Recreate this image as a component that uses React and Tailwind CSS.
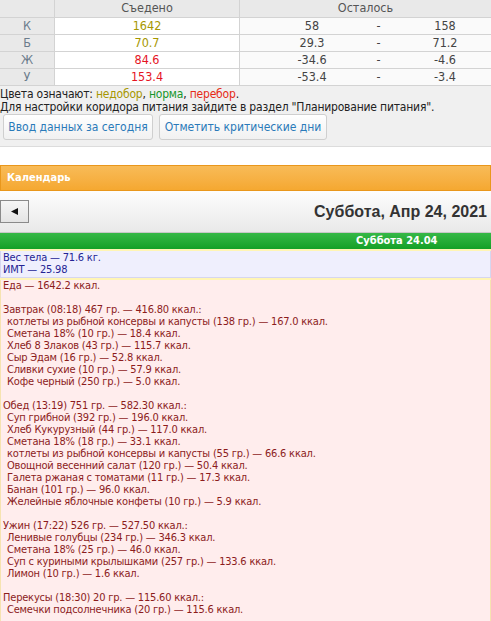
import React from "react";

const nutrients = [
    { label: "К", eaten: "1642", color: "text-[#a69700]", left: "58", right: "158" },
    { label: "Б", eaten: "70.7", color: "text-[#a69700]", left: "29.3", right: "71.2" },
    { label: "Ж", eaten: "84.6", color: "text-[#e5141f]", left: "-34.6", right: "-4.6" },
    { label: "У", eaten: "153.4", color: "text-[#e5141f]", left: "-53.4", right: "-3.4" },
];

const meals = [
    {
        title: "Завтрак (08:18) 467 гр. — 416.80 ккал.:",
        items: [
            "котлеты из рыбной консервы и капусты (138 гр.) — 167.0 ккал.",
            "Сметана 18% (10 гр.) — 18.4 ккал.",
            "Хлеб 8 Злаков (43 гр.) — 115.7 ккал.",
            "Сыр Эдам (16 гр.) — 52.8 ккал.",
            "Сливки сухие (10 гр.) — 57.9 ккал.",
            "Кофе черный (250 гр.) — 5.0 ккал.",
        ],
    },
    {
        title: "Обед (13:19) 751 гр. — 582.30 ккал.:",
        items: [
            "Суп грибной (392 гр.) — 196.0 ккал.",
            "Хлеб Кукурузный (44 гр.) — 117.0 ккал.",
            "Сметана 18% (18 гр.) — 33.1 ккал.",
            "котлеты из рыбной консервы и капусты (55 гр.) — 66.6 ккал.",
            "Овощной весенний салат (120 гр.) — 50.4 ккал.",
            "Галета ржаная с томатами (11 гр.) — 17.3 ккал.",
            "Банан (101 гр.) — 96.0 ккал.",
            "Желейные яблочные конфеты (10 гр.) — 5.9 ккал.",
        ],
    },
    {
        title: "Ужин (17:22) 526 гр. — 527.50 ккал.:",
        items: [
            "Ленивые голубцы (234 гр.) — 346.3 ккал.",
            "Сметана 18% (25 гр.) — 46.0 ккал.",
            "Суп с куриными крылышками (257 гр.) — 133.6 ккал.",
            "Лимон (10 гр.) — 1.6 ккал.",
        ],
    },
    {
        title: "Перекусы (18:30) 20 гр. — 115.60 ккал.:",
        items: ["Семечки подсолнечника (20 гр.) — 115.6 ккал."],
    },
];

const App = () => {
    return (
        <div className="w-[491px] h-[621px] overflow-hidden bg-white font-['DejaVu_Sans_Condensed','DejaVu_Sans',sans-serif]">
            {/* summary table */}
            <div className="bg-[#f0f0f0] border-b border-[#dcdcdc]">
                <div className="text-[12.5px] text-[#555]">
                    <div className="flex h-[18px] bg-[#e9e9e9] border-b border-[#d3d3d3]">
                        <div className="w-[55px] border-r border-[#d3d3d3]"></div>
                        <div className="w-[185px] border-r border-[#d3d3d3] flex items-center justify-center">Съедено</div>
                        <div className="flex-1 flex items-center justify-center">Осталось</div>
                    </div>
                    {
                        nutrients.map((row, i) => {
                            return <div className="flex h-[17px] border-b border-[#d3d3d3]" key={i}>
                                <div className="w-[55px] bg-[#e9e9e9] border-r border-[#d3d3d3] flex items-center justify-center text-[#6b7c8c]">{row.label}</div>
                                <div className={"w-[185px] bg-white border-r border-[#d3d3d3] flex items-center justify-center " + row.color}>{row.eaten}</div>
                                <div className="flex-1 bg-[#fafafa] flex items-center pl-[39px] text-[#444]">
                                    <div className="w-[66px] text-center">{row.left}</div>
                                    <div className="w-[67px] text-center">-</div>
                                    <div className="w-[66px] text-center">{row.right}</div>
                                </div>
                            </div>
                        })
                    }
                </div>

                <div className="text-[12px] text-[#222] leading-[13px] tracking-[-0.2px] pt-[2px]">
                    <p>Цвета означают: <span className="text-[#a69700]">недобор</span>, <span className="text-[#16962a]">норма</span>, <span className="text-[#e62b17]">перебор</span>.</p>
                    <p>Для настройки коридора питания зайдите в раздел "Планирование питания".</p>
                </div>

                <div className="flex gap-[6px] pl-[3px] pb-[6px]">
                    <button className="h-[26px] w-[150px] rounded-[3px] border border-[#cfcfcf] bg-gradient-to-b from-white to-[#f1f1f1] text-[12px] text-[#2a7ab9]">Ввод данных за сегодня</button>
                    <button className="h-[26px] w-[168px] rounded-[3px] border border-[#cfcfcf] bg-gradient-to-b from-white to-[#f1f1f1] text-[12px] text-[#2a7ab9]">Отметить критические дни</button>
                </div>
            </div>

            <div className="h-[18px]"></div>

            {/* calendar */}
            <div className="h-[26px] bg-gradient-to-b from-[#f8bb57] to-[#f5a830] border border-[#e9971c] flex items-center pl-[6px] text-[11px] font-bold text-white">
                Календарь
            </div>

            <div className="h-[42px] bg-gradient-to-b from-[#fdfdfd] to-[#e9e9e9] border-b border-[#c8c8c8] flex items-center justify-between pr-[4px]">
                <button className="w-[29px] h-[23px] bg-gradient-to-b from-[#f6f6f6] to-[#e4e4e4] border border-[#8a8a8a] flex items-center justify-center">
                    <svg width="9" height="9" viewBox="0 0 9 9"><path d="M8 1 L1 4.5 L8 8 Z" fill="#111" /></svg>
                </button>
                <div className="text-[16px] font-bold text-[#333] font-['Liberation_Sans',sans-serif]">Суббота, Апр 24, 2021</div>
            </div>

            <div className="h-[16px] bg-gradient-to-b from-[#35b846] to-[#12a026] flex items-center text-[11px] font-bold text-white pl-[356px]">
                Суббота 24.04
            </div>

            <div className="border-t-2 border-[#fff5b5]">
                <div className="bg-[#efeffd] border-x border-b border-[#d6d6ef] text-[11px] leading-[12px] tracking-[-0.2px] text-[#242494] px-[2px] py-[1px]">
                    <p>Вес тела — 71.6 кг.</p>
                    <p>ИМТ — 25.98</p>
                </div>
                <div className="h-[2px] bg-[#fff5b5]"></div>
                <div className="bg-[#ffeded] border-x border-[#f6e3b0] text-[11px] leading-[12px] tracking-[-0.2px] text-[#8c1c1c] px-[2px] h-[400px]">
                    <p>Еда — 1642.2 ккал.</p>
                    {
                        meals.map((meal, i) => {
                            return <div key={i}>
                                <p>&nbsp;</p>
                                <p>{meal.title}</p>
                                {
                                    meal.items.map((item, j) => {
                                        return <p className="pl-[4px]" key={j}>{item}</p>
                                    })
                                }
                            </div>
                        })
                    }
                </div>
            </div>
        </div>
    )
}

export default App;
